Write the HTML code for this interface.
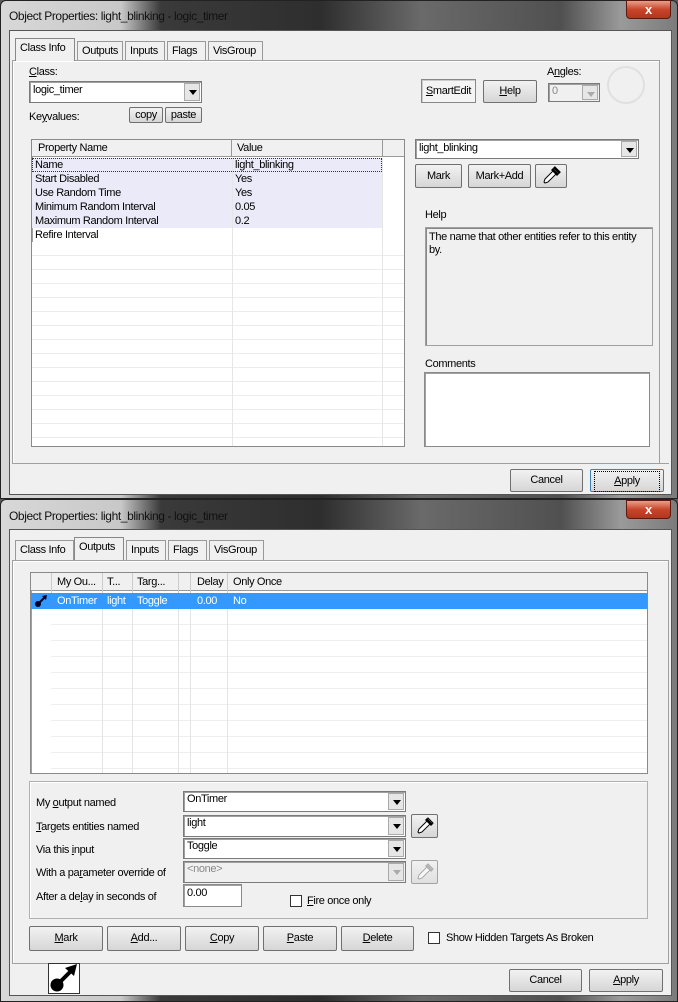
<!DOCTYPE html>
<html><head><meta charset="utf-8"><style>
*{box-sizing:border-box;margin:0;padding:0}
body{width:678px;height:1002px;overflow:hidden;background:#5a5a5a;font-family:"Liberation Sans",sans-serif;font-size:11px;letter-spacing:-0.35px;color:#000;position:relative}
.a{position:absolute}
.win{position:absolute;left:0;width:678px;border:1px solid #222;border-radius:6px 6px 0 0;background:linear-gradient(90deg,#d8d8d8 0,#c8c8c8 120px,#3a3a3a 160px,#2e2e2e 320px,#6a6a6a 420px,#505050 560px,#9a9a9a 620px,#7a7a7a 678px)}
.title{position:absolute;left:8px;top:8px;font-size:12px;color:#111;letter-spacing:-0.4px}
.close{position:absolute;width:45px;height:19px;border:1px solid #5a1a10;border-radius:0 0 4px 4px;background:linear-gradient(#e9a08a,#c8452a 50%,#b2361f);color:#fff;font-weight:bold;font-size:13px;text-align:center;line-height:17px}
.client{position:absolute;left:8px;width:663px;background:#f0f0f0;border:1px solid #555}
.panel{position:absolute;border:1px solid #a0a0a0;background:#f0f0f0;box-shadow:inset 1px 1px 0 #fff}
.tab{position:absolute;height:20px;border:1px solid #999;border-bottom:none;background:#f0f0f0;padding:3px 4px 0;white-space:nowrap}
.tab.sel{height:23px;background:#f0f0f0;z-index:2;border-color:#888}
.btn{position:absolute;border:1px solid #707070;background:linear-gradient(#f2f2f2,#e4e4e4 50%,#d6d6d6);text-align:center;border-radius:2px;white-space:nowrap}
.combo{position:absolute;background:#fff;border:1px solid #7a7a7a;box-shadow:inset 1px 1px 0 #a0a0a0;padding:2px 3px;white-space:nowrap}
.combo .dd{position:absolute;right:1px;top:1px;bottom:1px;width:16px;background:#e6e6e6;border:1px solid #aaa}
.combo .dd:after{content:"";position:absolute;left:4px;top:6px;border:4px solid transparent;border-top:5px solid #000}
.combo.dis{background:#f0f0f0;color:#888}
.combo.dis .dd:after{border-top-color:#aaa}
.box{position:absolute;background:#fff;border:1px solid #8a8a8a;box-shadow:inset 1px 1px 0 #a0a0a0}
.chk{position:absolute;width:12px;height:12px;border:1px solid #333;background:#fff}
u{text-decoration:underline}
.row{position:absolute;left:0;height:14px;line-height:14px;white-space:nowrap}
</style></head><body>

<div class="win" style="top:0;height:499px">
 <div class="title">Object Properties: light_blinking - logic_timer</div>
 <div class="close" style="left:625px;top:-1px">x</div>
 <div class="client" style="top:29px;height:465px">
  <div class="tab sel" style="left:5px;top:7px;width:60px">Class Info</div>
  <div class="tab" style="left:67px;top:10px;width:46px">Outputs</div>
  <div class="tab" style="left:115px;top:10px;width:40px">Inputs</div>
  <div class="tab" style="left:157px;top:10px;width:39px">Flags</div>
  <div class="tab" style="left:198px;top:10px;width:55px">VisGroup</div>
  <div class="panel" style="left:2px;top:29px;width:648px;height:404px"></div>
 </div>
 <div class="a" style="left:28px;top:65px"><u>C</u>lass:</div>
 <div class="combo" style="left:28px;top:80px;width:173px;height:22px">logic_timer<div class="dd"></div></div>
 <div class="a" style="left:28px;top:110px">Ke<u>y</u>values:</div>
 <div class="btn" style="left:128px;top:106px;width:34px;height:16px;line-height:14px">copy</div>
 <div class="btn" style="left:164px;top:106px;width:37px;height:16px;line-height:14px">paste</div>

 <div class="a" style="left:420px;top:78px;width:55px;height:24px;border:1px solid #888;background:#f4f4f4;box-shadow:inset 1px 1px 0 #ccc;text-align:center;line-height:22px"><u>S</u>martEdit</div>
 <div class="btn" style="left:482px;top:79px;width:54px;height:23px;line-height:21px"><u>H</u>elp</div>
 <div class="a" style="left:546px;top:65px">A<u>n</u>gles:</div>
 <div class="combo dis" style="left:547px;top:82px;width:52px;height:19px;padding-top:1px">0<div class="dd"></div></div>
 <div class="a" style="left:606px;top:65px;width:38px;height:38px;border-radius:50%;border:2px solid #e0e0e0;background:#f0f0f0"></div>

 <div class="box" style="left:30px;top:138px;width:374px;height:308px;overflow:hidden">
  <div class="a" style="left:0;top:0;width:372px;height:17px;background:#f0f0f0;border-bottom:1px solid #999"></div>
  <div class="a" style="left:6px;top:2px">Property Name</div>
  <div class="a" style="left:205px;top:2px">Value</div>
  <div class="a" style="left:199px;top:0;width:1px;height:17px;background:#999"></div>
  <div class="a" style="left:350px;top:0;width:1px;height:17px;background:#999"></div>
  <div class="a" style="left:0;top:18px;width:350px;height:70px;background:#eaeaf8"></div>
  <div class="a" style="left:0;top:18px;width:350px;height:14px;border:1px dotted #333"></div>
  <div class="a" style="left:200px;top:18px;width:1px;height:290px;background:#e6e6e6"></div>
  <div class="a" style="left:350px;top:18px;width:1px;height:290px;background:#e6e6e6"></div>
  <div class="row" style="top:18px;left:3px">Name</div><div class="row" style="top:18px;left:203px">light_blinking</div>
  <div class="row" style="top:32px;left:3px">Start Disabled</div><div class="row" style="top:32px;left:203px">Yes</div>
  <div class="row" style="top:46px;left:3px">Use Random Time</div><div class="row" style="top:46px;left:203px">Yes</div>
  <div class="row" style="top:60px;left:3px">Minimum Random Interval</div><div class="row" style="top:60px;left:203px">0.05</div>
  <div class="row" style="top:74px;left:3px">Maximum Random Interval</div><div class="row" style="top:74px;left:203px">0.2</div>
  <div class="row" style="top:88px;left:3px">Refire Interval</div>
  <div class="a" style="left:0;top:102px;width:372px;height:206px;background:repeating-linear-gradient(#fff 0,#fff 13px,#ececec 13px,#ececec 14px)"></div>
  <div class="a" style="left:200px;top:102px;width:1px;height:206px;background:#e6e6e6"></div>
  <div class="a" style="left:350px;top:102px;width:1px;height:206px;background:#e6e6e6"></div>
 </div>

 <div class="combo" style="left:414px;top:138px;width:224px;height:20px;padding-top:2px">light_blinking<div class="dd"></div></div>
 <div class="btn" style="left:414px;top:163px;width:47px;height:24px;line-height:22px">Mark</div>
 <div class="btn" style="left:467px;top:163px;width:63px;height:24px;line-height:22px">Mark+Add</div>
 <div class="btn" style="left:534px;top:163px;width:32px;height:24px"><svg width="20" height="20" viewBox="0 0 20 20" style="margin-top:1px"><path d="M13 2 L18 7 L15 8 L7 16 L4 17 L3 16 L4 13 L12 5 Z" fill="#fff" stroke="#000"/><path d="M12 2 L18 8 L16 10 L10 4 Z" fill="#000"/><path d="M13 1 L19 7" stroke="#000" stroke-width="2.5"/></svg></div>
 <div class="a" style="left:424px;top:208px">Help</div>
 <div class="a" style="left:424px;top:226px;width:228px;height:119px;border:1px solid #a0a0a0;box-shadow:inset 1px 1px 0 #888;padding:3px 3px;line-height:13px">The name that other entities refer to this entity by.</div>
 <div class="a" style="left:424px;top:357px">Comments</div>
 <div class="box" style="left:423px;top:371px;width:226px;height:75px"></div>
 <div class="a" style="left:11px;top:462px;width:657px;height:1px;background:#a0a0a0"></div>
 <div class="btn" style="left:509px;top:468px;width:73px;height:23px;line-height:21px">Cancel</div>
 <div class="btn" style="left:589px;top:468px;width:74px;height:23px;line-height:19px;border-color:#3c7fb1"><span style="display:inline-block;border:1px dotted #000;width:66px;margin-top:1px"><u>A</u>pply</span></div>
</div>

<div class="win" style="top:499px;height:503px">
 <div class="title" style="top:9px">Object Properties: light_blinking - logic_timer</div>
 <div class="close" style="left:625px;top:0px">x</div>
 <div class="client" style="top:29px;height:467px">
  <div class="tab" style="left:5px;top:10px;width:59px">Class Info</div>
  <div class="tab sel" style="left:64px;top:7px;width:50px">Outputs</div>
  <div class="tab" style="left:116px;top:10px;width:40px">Inputs</div>
  <div class="tab" style="left:158px;top:10px;width:39px">Flags</div>
  <div class="tab" style="left:199px;top:10px;width:55px">VisGroup</div>
  <div class="panel" style="left:2px;top:30px;width:657px;height:404px"></div>
 </div>
</div>
<div class="box" style="left:30px;top:572px;width:618px;height:202px;overflow:hidden">
 <div class="a" style="left:0;top:0;width:616px;height:18px;background:#f0f0f0;border-bottom:1px solid #999"></div>
 <div class="a" style="left:20px;top:0;width:1px;height:200px;background:#ccc"></div>
 <div class="a" style="left:71px;top:0;width:1px;height:200px;background:#ccc"></div>
 <div class="a" style="left:101px;top:0;width:1px;height:200px;background:#ccc"></div>
 <div class="a" style="left:147px;top:0;width:1px;height:200px;background:#ccc"></div>
 <div class="a" style="left:159px;top:0;width:1px;height:200px;background:#ccc"></div>
 <div class="a" style="left:196px;top:0;width:1px;height:200px;background:#ccc"></div>
 <div class="a" style="left:26px;top:3px">My Ou...</div>
 <div class="a" style="left:76px;top:3px">T...</div>
 <div class="a" style="left:106px;top:3px">Targ...</div>
 <div class="a" style="left:166px;top:3px">Delay</div>
 <div class="a" style="left:202px;top:3px">Only Once</div>
 <div class="a" style="left:0;top:20px;width:616px;height:16px;background:#3399ff;color:#fff;line-height:16px">
  <svg class="a" style="left:3px;top:1px" width="14" height="14" viewBox="0 0 14 14"><circle cx="4" cy="10" r="3" fill="#002"/><path d="M4 10 L11 3" stroke="#002" stroke-width="2"/><path d="M8 2 L13 1 L12 6 Z" fill="#002"/></svg>
  <span class="a" style="left:26px">OnTimer</span><span class="a" style="left:76px">light</span><span class="a" style="left:106px">Toggle</span><span class="a" style="left:166px">0.00</span><span class="a" style="left:202px">No</span>
 </div>
 <div class="a" style="left:20px;top:36px;width:596px;height:166px;background:repeating-linear-gradient(#fff 0,#fff 15px,#eee 15px,#eee 16px)"></div>
 <div class="a" style="left:71px;top:36px;width:1px;height:170px;background:#e4e4e4"></div>
 <div class="a" style="left:101px;top:36px;width:1px;height:170px;background:#e4e4e4"></div>
 <div class="a" style="left:147px;top:36px;width:1px;height:170px;background:#e4e4e4"></div>
 <div class="a" style="left:159px;top:36px;width:1px;height:170px;background:#e4e4e4"></div>
 <div class="a" style="left:196px;top:36px;width:1px;height:170px;background:#e4e4e4"></div>
</div>
<div class="a" style="left:29px;top:781px;width:619px;height:138px;border:1px solid #b0b0b0;box-shadow:inset 1px 1px 0 #fff"></div>
<div class="a" style="left:36px;top:797px">My <u>o</u>utput named</div>
<div class="a" style="left:36px;top:821px"><u>T</u>argets entities named</div>
<div class="a" style="left:36px;top:844px">Via this <u>i</u>nput</div>
<div class="a" style="left:36px;top:867px">With a pa<u>r</u>ameter override of</div>
<div class="a" style="left:36px;top:891px">After a de<u>l</u>ay in seconds of</div>
<div class="combo" style="left:183px;top:791px;width:223px;height:21px;padding-top:1px">OnTimer<div class="dd"></div></div>
<div class="combo" style="left:183px;top:815px;width:223px;height:22px;padding-top:1px">light<div class="dd"></div></div>
<div class="combo" style="left:183px;top:838px;width:223px;height:21px;padding-top:1px">Toggle<div class="dd"></div></div>
<div class="combo dis" style="left:183px;top:861px;width:223px;height:22px;padding-top:1px">&lt;none&gt;<div class="dd"></div></div>
<div class="btn" style="left:411px;top:814px;width:27px;height:24px"><svg width="20" height="20" viewBox="0 0 20 20" style="margin-top:1px"><path d="M13 2 L18 7 L15 8 L7 16 L4 17 L3 16 L4 13 L12 5 Z" fill="#fff" stroke="#000"/><path d="M12 2 L18 8 L16 10 L10 4 Z" fill="#000"/></svg></div>
<div class="btn" style="left:411px;top:860px;width:27px;height:24px;opacity:.6"><svg width="20" height="20" viewBox="0 0 20 20" style="margin-top:1px"><path d="M13 2 L18 7 L15 8 L7 16 L4 17 L3 16 L4 13 L12 5 Z" fill="#fff" stroke="#777"/><path d="M12 2 L18 8 L16 10 L10 4 Z" fill="#888"/></svg></div>
<div class="box" style="left:183px;top:884px;width:59px;height:23px;padding:2px 3px">0.00</div>
<div class="chk" style="left:290px;top:895px"></div>
<div class="a" style="left:307px;top:895px"><u>F</u>ire once only</div>
<div class="btn" style="left:29px;top:926px;width:74px;height:25px;line-height:23px"><u>M</u>ark</div>
<div class="btn" style="left:107px;top:926px;width:74px;height:25px;line-height:23px"><u>A</u>dd...</div>
<div class="btn" style="left:185px;top:926px;width:74px;height:25px;line-height:23px"><u>C</u>opy</div>
<div class="btn" style="left:263px;top:926px;width:74px;height:25px;line-height:23px"><u>P</u>aste</div>
<div class="btn" style="left:341px;top:926px;width:73px;height:25px;line-height:23px"><u>D</u>elete</div>
<div class="chk" style="left:428px;top:932px"></div>
<div class="a" style="left:446px;top:932px">Show Hidden Targets As Broken</div>
<div class="a" style="left:48px;top:963px;width:32px;height:31px;background:#fff;border:1px solid #333">
 <svg width="30" height="29" viewBox="0 0 30 29"><circle cx="8" cy="21" r="6.5" fill="#000"/><path d="M8 21 L22 7" stroke="#000" stroke-width="4"/><path d="M16 4 L28 0 L25 12 Z" fill="#000"/></svg>
</div>
<div class="btn" style="left:509px;top:969px;width:73px;height:23px;line-height:21px">Cancel</div>
<div class="btn" style="left:589px;top:969px;width:74px;height:23px;line-height:21px"><u>A</u>pply</div>
</body></html>
